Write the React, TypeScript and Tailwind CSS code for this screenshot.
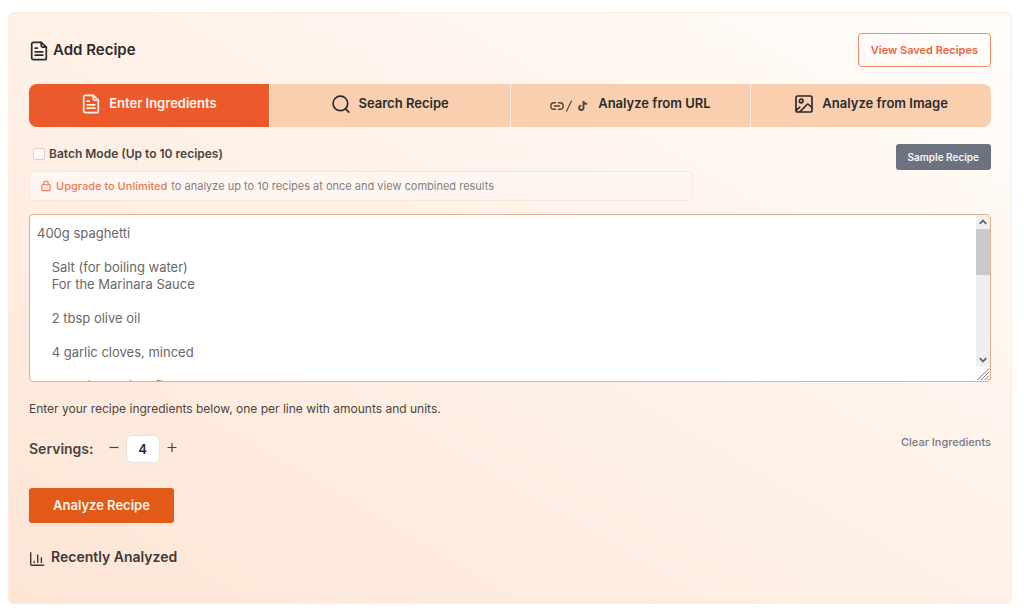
import { useRef, useState } from "react";
import type { ReactNode, SVGProps } from "react";

const SAMPLE = `400g spaghetti

    Salt (for boiling water)
    For the Marinara Sauce

    2 tbsp olive oil

    4 garlic cloves, minced

    1 medium onion, finely chopped

    800g canned crushed tomatoes

    1 tsp dried oregano

    1 tsp dried basil

    1/2 tsp red pepper flakes

    Salt and black pepper, to taste

    1 tbsp tomato paste

    Fresh basil leaves

    50g grated parmesan
`;

function Icon({ children, ...props }: SVGProps<SVGSVGElement>) {
  return (
    <svg
      viewBox="0 0 20 20"
      fill="none"
      stroke="currentColor"
      strokeWidth="1.7"
      strokeLinecap="round"
      strokeLinejoin="round"
      aria-hidden="true"
      {...props}
    >
      {children}
    </svg>
  );
}

function DocIcon({ className }: { className: string }) {
  return (
    <Icon className={className}>
      <path d="M12.2 1.3H4.5A1.8 1.8 0 0 0 2.7 3.1v13.8a1.8 1.8 0 0 0 1.8 1.8h11a1.8 1.8 0 0 0 1.8-1.8V6.2z" />
      <path d="M12.2 1.3v3.3a1.6 1.6 0 0 0 1.6 1.6h3.5M6.2 7.2h2M6.2 10.8h7.6M6.2 14.2h7.6" />
    </Icon>
  );
}

function SearchIcon() {
  return (
    <Icon className="h-5 w-5">
      <circle cx="9.4" cy="9.4" r="7.3" />
      <path d="m14.6 14.8 3.2 3.3" />
    </Icon>
  );
}

function UrlIcons() {
  return (
    <span className="flex items-center gap-0.5 pt-1 text-[#4f4238]">
      <svg viewBox="0 0 14 10" className="h-2.5 w-3.5" fill="none" stroke="currentColor" strokeWidth="1.4" strokeLinecap="round" aria-hidden="true">
        <path d="M5.5 1.7H4.1a3.3 3.3 0 0 0 0 6.6h1.4M8.5 1.7h1.4a3.3 3.3 0 0 1 0 6.6H8.5M4.5 5h5" />
      </svg>
      <svg viewBox="0 0 6 12" className="h-3 w-1.5" fill="none" stroke="currentColor" strokeWidth="1.1" aria-hidden="true">
        <path d="M5.6.6.4 11.4" />
      </svg>
      <svg viewBox="0 0 10 12" className="ml-1 h-3 w-2.5" fill="none" stroke="currentColor" strokeWidth="1.9" aria-hidden="true">
        <path d="M5.5 1v6.800a2.200 2.200 0 1 1-2.300-2.200M5.500 1c.2 1.800 1.400 2.900 3.600 3" />
      </svg>
    </span>
  );
}

function ImageIcon() {
  return (
    <Icon className="h-5 w-5">
      <rect x="2" y="2" width="16" height="16" rx="1.8" />
      <circle cx="7.2" cy="7" r="1.8" />
      <path d="m6 17.8 7-7.3q.8-.8 1.6 0l3.2 3M2.4 16.2l3.4-3" />
    </Icon>
  );
}

function LockIcon() {
  return (
    <svg viewBox="0 0 12 12" className="h-3 w-3 shrink-0" fill="none" stroke="currentColor" strokeWidth="1.1" strokeLinejoin="round" aria-hidden="true">
      <rect x="1.8" y="4.8" width="8.4" height="5.8" rx=".8" />
      <path d="M3.8 4.8V3.2a2.2 2.2 0 0 1 4.4 0v1.6M4.5 7.8h.6M6.9 7.8h.6" />
    </svg>
  );
}

function ChartIcon() {
  return (
    <svg viewBox="0 0 16 16" className="h-4 w-4" fill="none" stroke="currentColor" strokeWidth="1.4" strokeLinecap="round" aria-hidden="true">
      <path d="M1.700 1.700v11.600a1 1 0 0 0 1 1h12M5.200 10.500v1M8.700 4v7.500M12.400 6.800v4.700" />
    </svg>
  );
}

const TABS: { label: string; icon: ReactNode; gap: string }[] = [
  { label: "Enter Ingredients", icon: <DocIcon className="h-5 w-5" />, gap: "gap-2" },
  { label: "Search Recipe", icon: <SearchIcon />, gap: "gap-2" },
  { label: "Analyze from URL", icon: <UrlIcons />, gap: "gap-2.5" },
  { label: "Analyze from Image", icon: <ImageIcon />, gap: "gap-2" },
];

export default function App() {
  const [tab, setTab] = useState(0);
  const [text, setText] = useState(SAMPLE);
  const [servings, setServings] = useState(4);
  const area = useRef<HTMLTextAreaElement>(null);
  const scroll = (by: number) => area.current?.scrollBy({ top: by });

  return (
    <div className="bg-white px-2 pt-3 pb-2.5 font-['Inter',sans-serif] text-[#4a4541]">
      <main className="mr-1 rounded-md border border-[#ffecdf] bg-linear-to-tr from-[#fde5d6] via-[#fff1e7] to-[#fffdfb] px-5 pt-5 pb-9">
        <header className="flex items-center justify-between">
          <h1 className="flex items-center gap-1 text-[15px] leading-5 font-semibold text-[#2b2b2b]">
            <DocIcon className="mt-0.5 h-5 w-5" />
            Add Recipe
          </h1>
          <button className="h-[34px] rounded border border-[#f08a68] px-3 text-[11px] font-semibold text-[#ec6540]">
            View Saved Recipes
          </button>
        </header>

        <nav className="mt-[17px] grid grid-cols-4 gap-px overflow-hidden rounded-lg bg-[#ffe9d8]">
          {TABS.map((t, i) => (
            <button
              key={t.label}
              onClick={() => setTab(i)}
              className={
                "flex h-[43px] items-center justify-center pb-1 text-[13px] font-semibold " +
                t.gap +
                (tab === i ? " bg-[#ec5a2b] text-[#fff4ec]" : " bg-[#f9cfaf] text-[#2b2b2b]")
              }
            >
              {t.icon}
              {t.label}
            </button>
          ))}
        </nav>

        <div className="mt-[17px] flex items-start justify-between">
          <div className="w-[69%]">
            <label className="ml-1 flex h-5 items-center gap-1 text-xs font-semibold">
              <input type="checkbox" className="h-3 w-3 appearance-none rounded-xs border border-[#dccfca] bg-[#fff7f3] checked:bg-[#ec5a2b]" />
              Batch Mode (Up to 10 recipes)
            </label>
            <p className="mt-[7px] flex h-[30px] items-center gap-1 rounded border border-[#ffe5d8] bg-[#fff6f2] px-2.5 text-[11px] text-[#85807d]">
              <span className="text-[#ee7857]"><LockIcon /></span>
              <a href="#upgrade" className="font-medium text-[#ee7857]">Upgrade to Unlimited</a>
              to analyze up to 10 recipes at once and view combined results
            </p>
          </div>
          <button className="h-[26px] rounded-[3px] bg-[#6c7280] px-3 text-[10px] font-semibold text-[#f6f7f8]" onClick={() => setText(SAMPLE)}>
            Sample Recipe
          </button>
        </div>

        <div className="mt-[13px] flex h-[168px] overflow-hidden rounded border border-[#e0b08a] bg-white">
          <textarea
            ref={area}
            id="ingredients"
            aria-label="Ingredients"
            aria-describedby="ingredients-help"
            value={text}
            onChange={(e) => setText(e.target.value)}
            className="flex-1 resize-none overflow-y-scroll px-[7px] pt-2.5 text-[13px] leading-[17px] text-[#686868] outline-none [scrollbar-width:none]"
          />
          <div className="flex w-3.5 flex-col">
            <div className="flex flex-1 flex-col bg-[#efefef] text-[#666]">
              <button aria-label="Scroll up" onClick={() => scroll(-34)} className="flex h-3.5 items-center justify-center">
                <svg viewBox="0 0 8 6" className="h-1.5 w-2" fill="none" stroke="currentColor" strokeWidth="1.8"><path d="m.7 4.8 3.3-3.3 3.3 3.3" /></svg>
              </button>
              <div className="h-[46px] bg-[#cacaca]" />
              <button aria-label="Scroll down" onClick={() => scroll(34)} className="mt-auto flex h-3.5 items-center justify-center">
                <svg viewBox="0 0 8 6" className="h-1.5 w-2" fill="none" stroke="currentColor" strokeWidth="1.8"><path d="m.7 1.2 3.3 3.3 3.3-3.3" /></svg>
              </button>
            </div>
            <svg viewBox="0 0 14 14" className="h-3.5 w-3.5" stroke="#777" strokeWidth="1" aria-hidden="true">
              <path d="M1.5 13 13 1.5M5 13l8-8M8.5 13 13 8.5M11.5 13l1.5-1.5" />
            </svg>
          </div>
        </div>

        <p id="ingredients-help" className="mt-[18px] text-xs leading-[18px]">
          Enter your recipe ingredients below, one per line with amounts and units.
        </p>

        <div className="mt-[17px] flex items-start justify-between">
          <div className="flex items-center">
            <label htmlFor="servings" className="text-sm font-semibold">Servings:</label>
            <button aria-label="Fewer servings" onClick={() => setServings(Math.max(1, servings - 1))} className="mb-1 ml-2 flex h-5 w-6 items-center justify-center">
              <svg viewBox="0 0 10 10" className="h-2.5 w-2.5" stroke="currentColor" strokeWidth="1.2"><path d="M.5 5.5h9" /></svg>
            </button>
            <input
              id="servings"
              inputMode="numeric"
              value={servings}
              onChange={(e) => setServings(Number(e.target.value) || 1)}
              className="h-7 w-[34px] rounded-md border border-[#e3e4e8] bg-white text-center text-[13px] font-semibold text-[#2b2b2b]"
            />
            <button aria-label="More servings" onClick={() => setServings(servings + 1)} className="mb-1 flex h-5 w-6 items-center justify-center">
              <svg viewBox="0 0 10 10" className="h-2.5 w-2.5" stroke="currentColor" strokeWidth="1.2"><path d="M.5 5.5h9M5 1v9" /></svg>
            </button>
          </div>
          <button onClick={() => setText("")} className="text-[11px] leading-[14px] font-medium text-[#747985]">
            Clear Ingredients
          </button>
        </div>

        <button className="mt-[25px] block h-[35px] rounded-[3px] bg-[#e25918] px-6 text-[13px] font-semibold text-[#fff4ec]">
          Analyze Recipe
        </button>

        <h2 className="mt-6 flex items-center gap-1.5 text-sm leading-5 font-semibold text-[#3d3937]">
          <span className="pt-1"><ChartIcon /></span>
          Recently Analyzed
        </h2>
      </main>
    </div>
  );
}
